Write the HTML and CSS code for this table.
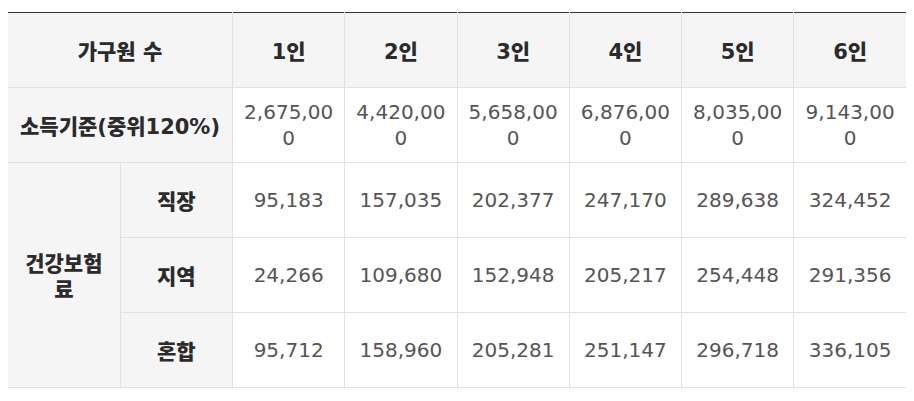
FILE: index.html
```html
<!DOCTYPE html>
<html lang="ko">
<head>
<meta charset="utf-8">
<link rel="stylesheet" href="styles.css">
</head>
<body>
<table class="tbl">
  <colgroup>
    <col><col><col><col><col><col><col><col>
  </colgroup>
  <tr>
    <th class="head" colspan="2">가구원 수</th>
    <th class="head">1인</th>
    <th class="head">2인</th>
    <th class="head">3인</th>
    <th class="head">4인</th>
    <th class="head">5인</th>
    <th class="head">6인</th>
  </tr>
  <tr>
    <th class="head" colspan="2">소득기준(중위120%)</th>
    <td class="val">2,675,000</td>
    <td class="val">4,420,000</td>
    <td class="val">5,658,000</td>
    <td class="val">6,876,000</td>
    <td class="val">8,035,000</td>
    <td class="val">9,143,000</td>
  </tr>
  <tr>
    <th class="head" rowspan="3">건강보험료</th>
    <th class="head">직장</th>
    <td class="val">95,183</td>
    <td class="val">157,035</td>
    <td class="val">202,377</td>
    <td class="val">247,170</td>
    <td class="val">289,638</td>
    <td class="val">324,452</td>
  </tr>
  <tr>
    <th class="head">지역</th>
    <td class="val">24,266</td>
    <td class="val">109,680</td>
    <td class="val">152,948</td>
    <td class="val">205,217</td>
    <td class="val">254,448</td>
    <td class="val">291,356</td>
  </tr>
  <tr>
    <th class="head">혼합</th>
    <td class="val">95,712</td>
    <td class="val">158,960</td>
    <td class="val">205,281</td>
    <td class="val">251,147</td>
    <td class="val">296,718</td>
    <td class="val">336,105</td>
  </tr>
</table>
</body>
</html>
```
FILE: styles.css
```css
html, body {
  background: #ffffff;
}
body {
  margin: 12px 8px 8px 8px;
  font-family: "DejaVu Sans", "Noto Sans CJK KR", sans-serif;
}
.tbl {
  width: 898px;
  table-layout: fixed;
  border-collapse: collapse;
  border-top: 1px solid #333333;
  border-bottom: 1px solid #e1e1e1;
}
.tbl col {
  width: 12.5%;
}
.tbl tr {
  height: 75px;
}
.tbl th,
.tbl td {
  border: 1px solid #e1e1e1;
  padding: 0 10px;
  text-align: center;
  vertical-align: middle;
  font-size: 20px;
  line-height: 26px;
  word-break: break-all;
}
.tbl tr > :first-child {
  border-left: none;
}
.tbl tr > :last-child {
  border-right: none;
}
.tbl tr:first-child > * {
  border-top: 1px solid #333333;
}
.head {
  background: #f5f5f5;
  color: #2b2b2b;
  font-weight: 900;
  font-size: 21px !important;
  padding-top: 3px !important;
}
.val {
  background: #ffffff;
  color: #555555;
  font-weight: 400;
}
```
